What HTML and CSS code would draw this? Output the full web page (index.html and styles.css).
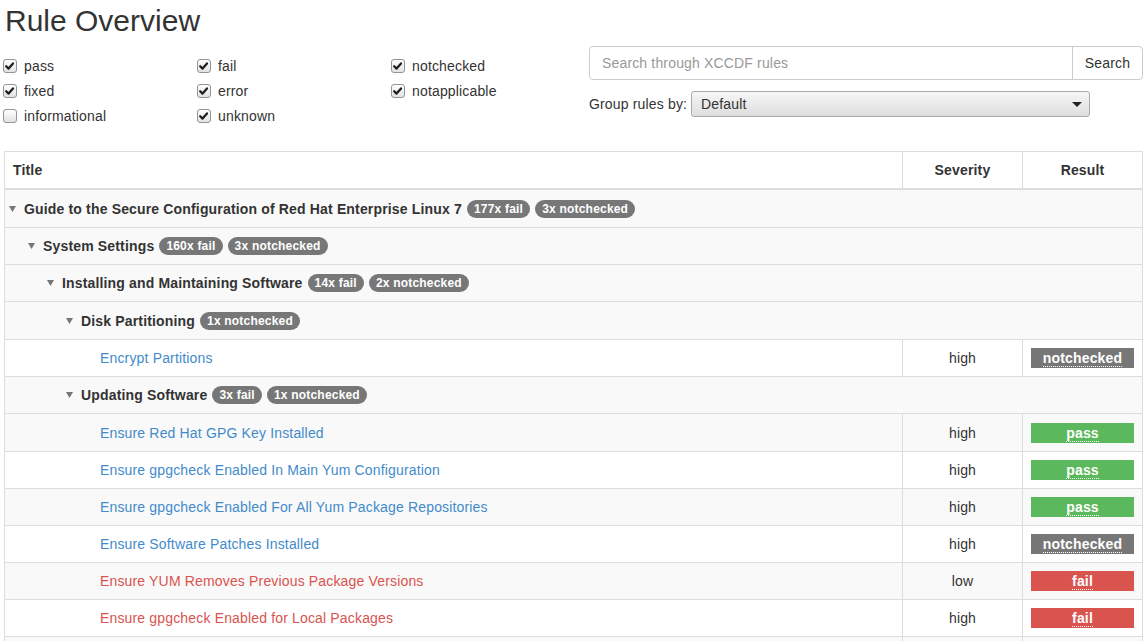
FILE: index.html
```html
<!DOCTYPE html>
<html>
<head>
<meta charset="utf-8">
<title>Rule Overview</title>
<link rel="stylesheet" href="styles.css">
</head>
<body>
<div class="page">
  <h2 class="page-title">Rule Overview</h2>
  <div class="controls">
    <div class="filters">
      <label class="cb"><span class="box checked"><svg viewBox="0 0 14 14"><path d="M3.4 7.2 L6 9.8 L10.8 4.2" /></svg></span>pass</label>
      <label class="cb"><span class="box checked"><svg viewBox="0 0 14 14"><path d="M3.4 7.2 L6 9.8 L10.8 4.2" /></svg></span>fail</label>
      <label class="cb"><span class="box checked"><svg viewBox="0 0 14 14"><path d="M3.4 7.2 L6 9.8 L10.8 4.2" /></svg></span>notchecked</label>
      <label class="cb"><span class="box checked"><svg viewBox="0 0 14 14"><path d="M3.4 7.2 L6 9.8 L10.8 4.2" /></svg></span>fixed</label>
      <label class="cb"><span class="box checked"><svg viewBox="0 0 14 14"><path d="M3.4 7.2 L6 9.8 L10.8 4.2" /></svg></span>error</label>
      <label class="cb"><span class="box checked"><svg viewBox="0 0 14 14"><path d="M3.4 7.2 L6 9.8 L10.8 4.2" /></svg></span>notapplicable</label>
      <label class="cb"><span class="box"></span>informational</label>
      <label class="cb"><span class="box checked"><svg viewBox="0 0 14 14"><path d="M3.4 7.2 L6 9.8 L10.8 4.2" /></svg></span>unknown</label>
    </div>
    <div class="search-area">
      <div class="input-group">
        <div class="search-input">Search through XCCDF rules</div>
        <div class="search-btn">Search</div>
      </div>
      <div class="group-by">
        <span class="group-label">Group rules by:</span>
        <div class="select"><span>Default</span><svg class="caret" viewBox="0 0 10 5"><polygon points="0,0 10,0 5,5"/></svg></div>
      </div>
    </div>
  </div>

  <table class="rules">
    <thead>
      <tr><th class="c-title">Title</th><th class="c-sev">Severity</th><th class="c-res">Result</th></tr>
    </thead>
    <tbody>
      <tr class="group tall"><td colspan="3" class="lvl0"><svg class="tri" viewBox="0 0 7 6"><polygon points="0,0 7,0 3.5,6"/></svg>Guide to the Secure Configuration of Red Hat Enterprise Linux 7 <span class="badge">177x fail</span> <span class="badge">3x notchecked</span></td></tr>
      <tr class="group"><td colspan="3" class="lvl1"><svg class="tri" viewBox="0 0 7 6"><polygon points="0,0 7,0 3.5,6"/></svg>System Settings <span class="badge">160x fail</span> <span class="badge">3x notchecked</span></td></tr>
      <tr class="group"><td colspan="3" class="lvl2"><svg class="tri" viewBox="0 0 7 6"><polygon points="0,0 7,0 3.5,6"/></svg>Installing and Maintaining Software <span class="badge">14x fail</span> <span class="badge">2x notchecked</span></td></tr>
      <tr class="group tall"><td colspan="3" class="lvl3"><svg class="tri" viewBox="0 0 7 6"><polygon points="0,0 7,0 3.5,6"/></svg>Disk Partitioning <span class="badge">1x notchecked</span></td></tr>
      <tr class="rule white"><td class="lvl4"><a class="link-blue">Encrypt Partitions</a></td><td class="sev">high</td><td class="res"><div class="label lbl-nc"><abbr>notchecked</abbr></div></td></tr>
      <tr class="group"><td colspan="3" class="lvl3"><svg class="tri" viewBox="0 0 7 6"><polygon points="0,0 7,0 3.5,6"/></svg>Updating Software <span class="badge">3x fail</span> <span class="badge">1x notchecked</span></td></tr>
      <tr class="rule gray tall"><td class="lvl4"><a class="link-blue">Ensure Red Hat GPG Key Installed</a></td><td class="sev">high</td><td class="res"><div class="label lbl-pass"><abbr>pass</abbr></div></td></tr>
      <tr class="rule white"><td class="lvl4"><a class="link-blue">Ensure gpgcheck Enabled In Main Yum Configuration</a></td><td class="sev">high</td><td class="res"><div class="label lbl-pass"><abbr>pass</abbr></div></td></tr>
      <tr class="rule gray"><td class="lvl4"><a class="link-blue">Ensure gpgcheck Enabled For All Yum Package Repositories</a></td><td class="sev">high</td><td class="res"><div class="label lbl-pass"><abbr>pass</abbr></div></td></tr>
      <tr class="rule white"><td class="lvl4"><a class="link-blue">Ensure Software Patches Installed</a></td><td class="sev">high</td><td class="res"><div class="label lbl-nc"><abbr>notchecked</abbr></div></td></tr>
      <tr class="rule gray"><td class="lvl4"><a class="link-red">Ensure YUM Removes Previous Package Versions</a></td><td class="sev">low</td><td class="res"><div class="label lbl-fail"><abbr>fail</abbr></div></td></tr>
      <tr class="rule white"><td class="lvl4"><a class="link-red">Ensure gpgcheck Enabled for Local Packages</a></td><td class="sev">high</td><td class="res"><div class="label lbl-fail"><abbr>fail</abbr></div></td></tr>
      <tr class="rule gray empty"><td class="lvl4"></td><td class="sev"></td><td class="res"></td></tr>
    </tbody>
  </table>
</div>
</body>
</html>
```

FILE: styles.css
```css
html, body {
  margin: 0;
  padding: 0;
  background: #fff;
}
body {
  font-family: "Liberation Sans", Arial, sans-serif;
  font-size: 14px;
  line-height: 20px;
  letter-spacing: 0.16px;
  color: #333;
  overflow: hidden;
  height: 641px;
}
.page {
  padding: 0 4px;
}
.page-title {
  margin: 4px 0 0 1px;
  font-size: 30px;
  line-height: 33px;
  font-weight: normal;
  letter-spacing: 0;
  color: #333;
}
.controls {
  display: flex;
  margin-top: 9px;
}
.filters {
  width: 585px;
  flex: none;
  padding-top: 7px;
  display: grid;
  grid-template-columns: 194px 194px 194px;
  grid-auto-rows: 25px;
}
.cb {
  display: flex;
  align-items: center;
  height: 25px;
  color: #333;
}
.box {
  width: 14px;
  height: 14px;
  box-sizing: border-box;
  border: 1px solid #949494;
  border-radius: 3px;
  background: linear-gradient(#ffffff, #e2e2e2);
  margin: 1px 7px 0 -1px;
  display: inline-flex;
  flex: none;
}
.box svg {
  width: 14px;
  height: 14px;
  margin: -1px 0 0 -1px;
}
.box svg path {
  fill: none;
  stroke: #1e1e1e;
  stroke-width: 2.4;
  stroke-linecap: round;
  stroke-linejoin: round;
}
.search-area {
  flex: 1;
}
.input-group {
  display: flex;
  height: 34px;
  box-sizing: border-box;
  border: 1px solid #ccc;
  border-radius: 4px;
}
.search-input {
  flex: 1;
  padding: 0 12px;
  line-height: 32px;
  color: #999;
}
.search-btn {
  width: 70px;
  box-sizing: border-box;
  border-left: 1px solid #ccc;
  text-align: center;
  line-height: 32px;
  color: #333;
}
.group-by {
  display: flex;
  align-items: center;
  margin-top: 11px;
}
.group-label {
  width: 102px;
  flex: none;
}
.select {
  width: 399px;
  height: 26px;
  box-sizing: border-box;
  border: 1px solid #aaa;
  border-radius: 3px;
  background: linear-gradient(#f6f6f6, #dedede);
  display: flex;
  align-items: center;
  justify-content: space-between;
  padding: 0 7px 0 9px;
  color: #333;
}
.caret {
  width: 10px;
  height: 5px;
}
.caret polygon {
  fill: #222;
}
.rules {
  margin-top: 23px;
  width: 100%;
  border-collapse: collapse;
  border: 1px solid #ddd;
}
.rules th, .rules td {
  padding: 8px;
  line-height: 20px;
  border-top: 1px solid #ddd;
  vertical-align: top;
}
.rules tr.tall td {
  padding-top: 9px;
}
.rules tr.empty td {
  height: 20px;
}
.rules th {
  font-weight: bold;
  border-bottom: 2px solid #ddd;
  text-align: center;
  border-left: 1px solid #ddd;
}
.rules th.c-title {
  text-align: left;
  border-left: none;
}
.c-sev, .c-res {
  width: 103px;
}
.group td {
  background: #f9f9f9;
  font-weight: bold;
}
.rule.gray td {
  background: #f9f9f9;
}
.rule.white td {
  background: #fff;
}
.rule td.sev, .rule td.res {
  border-left: 1px solid #ddd;
}
.sev {
  text-align: center;
}
.lvl0 { padding-left: 4px !important; }
.lvl1 { padding-left: 23px !important; }
.lvl2 { padding-left: 42px !important; }
.lvl3 { padding-left: 61px !important; }
.lvl4 { padding-left: 95px !important; }
.tri {
  width: 7px;
  height: 6px;
  margin-right: 8px;
  vertical-align: 2px;
}
.tri polygon {
  fill: #777;
}
.badge {
  display: inline-block;
  background: #777;
  color: #fff;
  font-size: 12px;
  font-weight: bold;
  line-height: 12px;
  letter-spacing: 0.2px;
  padding: 3px 7px;
  border-radius: 10px;
  vertical-align: 1px;
  margin-left: 1px;
}
.link-blue {
  color: #428bca;
}
.link-red {
  color: #d9534f;
}
.label {
  display: block;
  height: 20px;
  color: #fff;
  font-weight: bold;
  text-align: center;
  line-height: 20px;
}
.label abbr {
  text-decoration: none;
  border-bottom: 1px dotted #fff;
}
.lbl-nc { background: #777; }
.lbl-pass { background: #5cb85c; }
.lbl-fail { background: #d9534f; }
```
